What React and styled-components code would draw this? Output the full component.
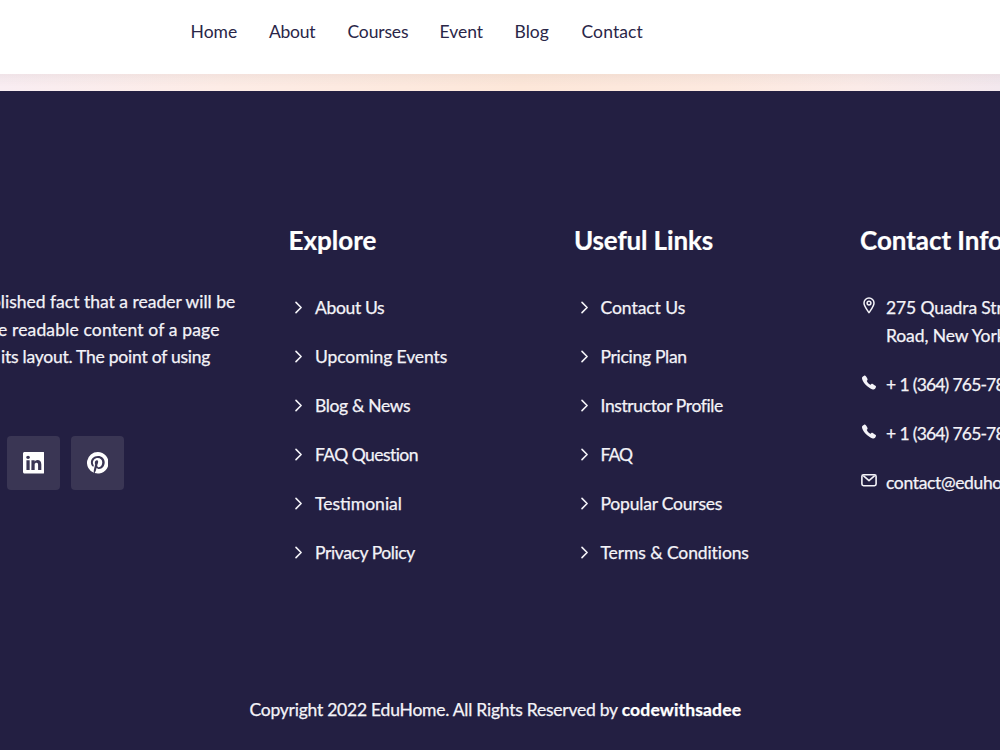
import React from "react";
import styled, { createGlobalStyle } from "styled-components";
import { BsLinkedin, BsPinterest } from "react-icons/bs";
import { IoCall } from "react-icons/io5";

const GlobalStyle = createGlobalStyle`
  * {
    box-sizing: border-box;
  }

  body {
    margin: 0;
    overflow: hidden;
    background: #231f42;
    font-family: "Lato", "Liberation Sans", sans-serif;
    font-size: 17.5px;
    line-height: 27.6px;
  }
`

const Page = styled.div`
  display: flex;
  flex-direction: column;
  height: 750px;
  overflow: hidden;
`

const Header = styled.header`
  flex: none;
  height: 74px;
  padding: 18px 0 0 190.5px;
  background: #fff;
`

const Nav = styled.nav`
  display: flex;
`

const NavLink = styled.a`
  width: ${({ $width }) => $width}px;
  color: #2a2648;
  letter-spacing: ${({ $track }) => $track || 0}px;
`

const Banner = styled.div`
  flex: none;
  height: 17.3px;
  background:
    linear-gradient(180deg, rgba(120, 100, 100, 0.07), rgba(120, 100, 100, 0) 70%),
    linear-gradient(90deg, #f9edf2 0%, #fdece6 22%, #fde7d9 52%, #fde9df 72%, #fbebe8 86%, #f3e8ee 100%);
`

const FooterArea = styled.footer`
  flex: 1;
  display: flex;
  flex-direction: column;
  padding-top: 131px;
  background: #231f42;
  color: #f4f3f8;
`

const Columns = styled.div`
  flex: none;
  display: grid;
  grid-template-columns: 288.5px 285.5px 286px 140px;
  height: 473.5px;
`

const Column = styled.div`
  min-width: 0;
  overflow: hidden;
  white-space: nowrap;
`

const About = styled(Column)`
  padding-top: 66px;
`

const Line = styled.div`
  margin-left: ${({ $start }) => $start || 0}px;
  letter-spacing: ${({ $track }) => $track || 0}px;
  -webkit-text-stroke: 0.25px;
`

const Socials = styled.div`
  display: flex;
  gap: 11px;
  margin: 65px 0 0 6.8px;
`

const SocialLink = styled.a`
  display: flex;
  align-items: center;
  justify-content: center;
  width: 53.2px;
  height: 54px;
  border-radius: 4px;
  background: #3a3654;
  color: #fff;
  font-size: 21.6px;
`

const Title = styled.h3`
  margin: 0 0 36px;
  color: #fff;
  font-size: 26px;
  font-weight: 700;
  line-height: 36px;
  letter-spacing: ${({ $track }) => $track || 0}px;
  -webkit-text-stroke: 0.2px;
`

const List = styled.ul`
  display: flex;
  flex-direction: column;
  gap: 21.4px;
  margin: 0;
  padding: 0;
  list-style: none;
`

const Item = styled.li`
  display: flex;
  gap: 12px;
  padding-left: 5.5px;
  letter-spacing: ${({ $track }) => $track || 0}px;
  -webkit-text-stroke: 0.25px;

  svg {
    flex: none;
    margin-top: 7px;
  }
`

const ContactItem = styled(Item)`
  gap: 9px;
  padding-left: 1px;
  word-spacing: ${({ $words }) => $words || 0}px;

  svg {
    width: 16px;
    height: 17px;
    margin-top: 3px;
  }
`

const Copyright = styled.p`
  margin: 0 0 0 249.5px;
  letter-spacing: -0.24px;
  -webkit-text-stroke: 0.25px;

  a {
    color: #fff;
    font-weight: 700;
    letter-spacing: 0.15px;
  }
`

const navLinks = [
  { label: "Home", width: 78.5, track: 0.05 },
  { label: "About", width: 78.5, track: -0.25 },
  { label: "Courses", width: 92, track: -0.15 },
  { label: "Event", width: 75, track: 0 },
  { label: "Blog", width: 67, track: 0 },
  { label: "Contact", width: 70, track: 0.1 },
];

const explore = [
  { label: "About Us", track: -0.35 },
  { label: "Upcoming Events", track: -0.1 },
  { label: "Blog & News", track: -0.35 },
  { label: "FAQ Question", track: -0.55 },
  { label: "Testimonial", track: 0 },
  { label: "Privacy Policy", track: -0.4 },
];

const usefulLinks = [
  { label: "Contact Us", track: -0.05 },
  { label: "Pricing Plan", track: -0.3 },
  { label: "Instructor Profile", track: -0.38 },
  { label: "FAQ", track: -0.9 },
  { label: "Popular Courses", track: -0.2 },
  { label: "Terms & Conditions", track: -0.1 },
];

const Chevron = () => (
  <svg width="9" height="13" viewBox="0 0 9 13" fill="none" stroke="currentColor" strokeWidth="1.6" strokeLinecap="round" strokeLinejoin="round">
    <path d="M2 1.4 7.1 6.5 2 11.6" />
  </svg>
);

const PinIcon = () => (
  <svg viewBox="0 0 16 17" fill="none" stroke="currentColor">
    <path d="M8 15.6C6.2 13 3 9.4 3 6.1a5 5 0 0 1 10 0C13 9.4 9.8 13 8 15.6Z" strokeWidth="1.5" strokeLinejoin="round" />
    <circle cx="8" cy="6.1" r="1.9" strokeWidth="1.5" />
  </svg>
);

const MailIcon = () => (
  <svg viewBox="0 0 16 17" fill="none" stroke="currentColor" strokeWidth="1.6" strokeLinejoin="round">
    <rect x="0.9" y="2.8" width="14.2" height="10.9" rx="1.6" />
    <path d="M2.3 3.7 8 8.6l5.7-4.900" />
  </svg>
);

const LinkColumn = ({ title, track, links }) => (
  <Column>
    <Title $track={track}>{title}</Title>
    <List>
      {links.map((link) => (
        <Item key={link.label} $track={link.track}>
          <Chevron />
          {link.label}
        </Item>
      ))}
    </List>
  </Column>
);

export default class App extends React.Component {
  render() {
    return (
      <>
        <GlobalStyle />
        <Page>
          <Header>
            <Nav>
              {navLinks.map((link) => (
                <NavLink key={link.label} $width={link.width} $track={link.track}>{link.label}</NavLink>
              ))}
            </Nav>
          </Header>
          <Banner />
          <FooterArea>
            <Columns>
              <About>
                <Line $start={-9} $track={0}>blished fact that a reader will be</Line>
                <Line $start={-2} $track={0.15}>e readable content of a page</Line>
                <Line $start={1} $track={-0.24}>its layout. The point of using</Line>
                <Socials>
                  <SocialLink><BsLinkedin /></SocialLink>
                  <SocialLink><BsPinterest /></SocialLink>
                </Socials>
              </About>
              <LinkColumn title="Explore" track={0} links={explore} />
              <LinkColumn title="Useful Links" track={-0.15} links={usefulLinks} />
              <Column>
                <Title $track={-0.05}>Contact Info</Title>
                <List>
                  <ContactItem $track={-0.1}>
                    <PinIcon />
                    <span>275 Quadra Street<br />Road, New York</span>
                  </ContactItem>
                  <ContactItem $track={-0.85} $words={0.5}>
                    <IoCall />
                    + 1 (364) 765-78
                  </ContactItem>
                  <ContactItem $track={-0.85} $words={0.5}>
                    <IoCall />
                    + 1 (364) 765-78
                  </ContactItem>
                  <ContactItem $track={-0.35}>
                    <MailIcon />
                    contact@eduhome.com
                  </ContactItem>
                </List>
              </Column>
            </Columns>
            <Copyright>
              Copyright 2022 EduHome. All Rights Reserved by <a>codewithsadee</a>
            </Copyright>
          </FooterArea>
        </Page>
      </>
    );
  }
};
